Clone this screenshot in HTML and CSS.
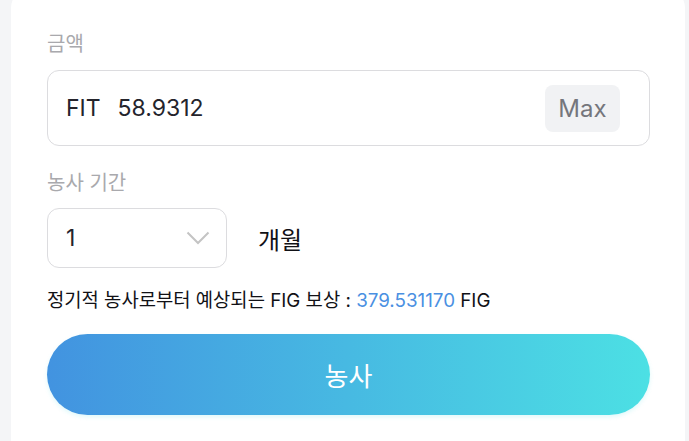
FILE: index.html
```html
<!DOCTYPE html>
<html lang="ko">
<head>
<meta charset="utf-8">
<link rel="stylesheet" href="styles.css">
</head>
<body>
<div class="card">
  <div class="label label-amount">금액</div>
  <div class="amount-box">
    <span class="unit">FIT</span>
    <span class="value">58.9312</span>
    <button class="max">Max</button>
  </div>
  <div class="label label-period">농사 기간</div>
  <div class="period-row">
    <div class="select">
      <span class="sel-value">1</span>
      <svg class="chev" width="24" height="14" viewBox="0 0 24 14"><path d="M1.5 1.5 L12 12 L22.5 1.5" fill="none" stroke="#c4c4c4" stroke-width="2"/></svg>
    </div>
    <span class="months">개월</span>
  </div>
  <p class="info">정기적 농사로부터 예상되는 FIG 보상 : <span class="hl">379.531170</span> FIG</p>
  <button class="farm">농사</button>
</div>
</body>
</html>
```

FILE: styles.css
```css
* { box-sizing: border-box; }
html, body { margin: 0; padding: 0; }
body {
  background: #f4f5f7;
  font-family: Inter, "Noto Sans CJK KR", sans-serif;
  overflow: hidden;
  height: 441px;
}
.card {
  background: #fff;
  margin: -12px 4px 0 11px;
  border-radius: 20px;
  padding: 43px 35px 40px 36px;
  height: 480px;
}
.label {
  font-size: 20px;
  line-height: 26px;
  color: #a9a9ad;
}
.label-amount { margin-bottom: 13px; }
.amount-box {
  height: 76px;
  border: 1px solid #dcdcdf;
  border-radius: 12px;
  display: flex;
  align-items: center;
  padding: 0 29px 0 18px;
}
.unit { font-size: 23px; color: #24242c; }
.value { font-size: 23px; color: #24242c; margin-left: 17px; flex: 1; }
.max {
  border: none;
  background: #f1f2f4;
  border-radius: 8px;
  width: 75px;
  height: 47px;
  font-family: inherit;
  font-size: 24px;
  color: #75767c;
  padding: 0;
}
.label-period { margin-top: 24px; margin-bottom: 12px; }
.period-row {
  display: flex;
  align-items: center;
}
.select {
  width: 180px;
  height: 60px;
  border: 1px solid #dcdcdf;
  border-radius: 12px;
  display: flex;
  align-items: center;
  justify-content: space-between;
  padding: 0 16px 0 18px;
}
.sel-value { font-size: 23px; color: #24242c; }
.chev { display: block; }
.months { margin-left: 31px; font-size: 24px; color: #111116; }
.info {
  margin: 20px 0 0;
  font-size: 18.8px;
  line-height: 26px;
  color: #111116;
}
.hl { color: #4a90e2; }
.farm {
  display: block;
  margin-top: 20px;
  width: 603px;
  height: 81px;
  border: none;
  border-radius: 41px;
  background: linear-gradient(90deg, #4293e0 0%, #4ce0e4 100%);
  box-shadow: 0 2px 4px rgba(76, 224, 228, 0.18);
  color: #fff;
  font-family: inherit;
  font-size: 26px;
  padding: 0;
}
```
